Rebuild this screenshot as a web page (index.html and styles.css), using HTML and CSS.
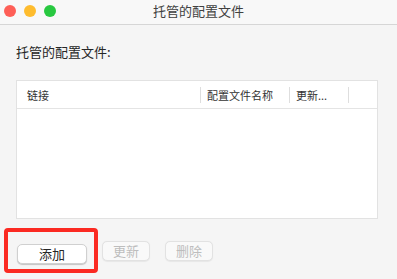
FILE: index.html
```html
<!DOCTYPE html>
<html lang="zh">
<head>
<meta charset="utf-8">
<link rel="stylesheet" href="styles.css">
</head>
<body>
<div class="window">
  <div class="titlebar">
    <div class="lights">
      <span class="light red"></span>
      <span class="light yellow"></span>
      <span class="light green"></span>
    </div>
    <div class="title">托管的配置文件</div>
    <div></div>
  </div>
  <div class="content">
    <div class="label">托管的配置文件:</div>
    <div class="table">
      <div class="thead">
        <div class="th c1">链接</div>
        <div class="th c2">配置文件名称</div>
        <div class="th c3">更新...</div>
        <div class="th c4"></div>
      </div>
      <div class="tbody"></div>
    </div>
    <div class="actions">
      <div class="highlight">
        <button class="btn primary">添加</button>
      </div>
      <button class="btn disabled">更新</button>
      <button class="btn disabled del">删除</button>
    </div>
  </div>
</div>
</body>
</html>
```
FILE: styles.css
```css
html, body {
  margin: 0;
  padding: 0;
}
body {
  width: 397px;
  height: 279px;
  overflow: hidden;
  font-family: "PingFang SC", "Noto Sans CJK SC", "Noto Sans", sans-serif;
  background: #f5f5f5;
}
.window {
  display: flex;
  flex-direction: column;
  height: 279px;
}
.titlebar {
  height: 24px;
  border-bottom: 1px solid #d6d6d6;
  background: #f8f8f8;
  display: grid;
  grid-template-columns: 1fr auto 1fr;
  align-items: center;
}
.lights {
  display: flex;
  gap: 8px;
  padding-left: 4px;
  margin-top: -3px;
}
.light {
  width: 12px;
  height: 12px;
  border-radius: 50%;
  display: block;
}
.red { background: #fe5f57; }
.yellow { background: #febc2e; }
.green { background: #28c840; }
.title {
  font-size: 13px;
  color: #404040;
  line-height: 18px;
  margin-top: -3px;
}
.content {
  flex: 1;
  padding: 0 19px 0 16px;
  display: flex;
  flex-direction: column;
}
.label {
  margin-top: 18px;
  font-size: 13px;
  line-height: 18px;
  color: #262626;
}
.table {
  margin-top: 19px;
  height: 139px;
  box-sizing: border-box;
  border: 1px solid #e2e2e2;
  background: #ffffff;
  display: flex;
  flex-direction: column;
}
.thead {
  height: 27px;
  border-bottom: 1px solid #e4e4e4;
  display: flex;
  align-items: center;
}
.th {
  font-size: 11px;
  color: #333333;
  line-height: 16px;
  height: 16px;
  box-sizing: border-box;
  padding-left: 6px;
  white-space: nowrap;
}
.c1 { width: 183px; padding-left: 10px; }
.c2 { width: 89px; border-left: 1px solid #dedede; }
.c3 { width: 59px; border-left: 1px solid #dedede; }
.c4 { flex: 1; border-left: 1px solid #dedede; }
.tbody { flex: 1; }
.actions {
  margin-top: 9px;
  display: flex;
  align-items: center;
}
.highlight {
  margin-left: -12px;
  width: 94px;
  height: 45px;
  box-sizing: border-box;
  border: 4px solid #fb2a22;
  border-radius: 4px;
  padding: 8px 0 0 9px;
  margin-right: 4px;
}
.btn {
  font-family: inherit;
  font-size: 13px;
  height: 20px;
  line-height: 18px;
  padding: 0;
  border-radius: 5px;
  box-sizing: border-box;
}
.primary {
  width: 70px;
  background: #ffffff;
  color: #262626;
  border: 0.5px solid #d0d0d0;
  box-shadow: 0 1px 1px rgba(0,0,0,0.2);
}
.disabled {
  width: 48px;
  background: #f9f9f9;
  color: #bdbdbd;
  border: 0.5px solid #e2e2e2;
  box-shadow: 0 0.5px 1px rgba(0,0,0,0.06);
  margin-top: 1px;
}
.del { margin-left: 15px; }
```
